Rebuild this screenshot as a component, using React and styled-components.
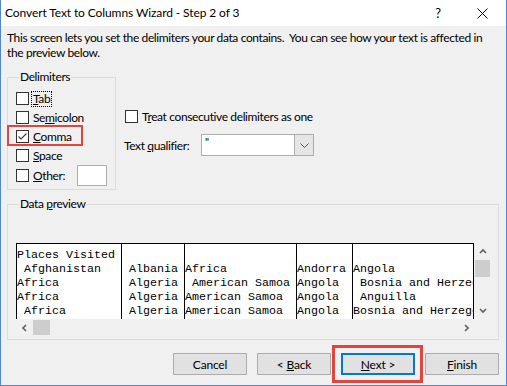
import React from "react";
import styled, { createGlobalStyle, css } from "styled-components";

const GlobalStyle = createGlobalStyle`
  body {
    margin: 0;
    background: #ffffff;
    font-family: "Segoe UI", Lato, "Noto Sans", Arial, sans-serif;
    font-size: 12px;
    letter-spacing: -0.38px;
    color: #000;
  }
`;

const preview = [
  { width: 105, lines: ["Places Visited", " Afghanistan", "Africa", "Africa", " Africa"] },
  { width: 63, lines: ["", " Albania", " Algeria", " Algeria", " Algeria"] },
  { width: 112, lines: ["", "Africa", " American Samoa", "American Samoa", "American Samoa"] },
  { width: 56, lines: ["", "Andorra", "Angola", "Angola", "Angola"] },
  { width: 122, lines: ["", "Angola", " Bosnia and Herzegovina", " Anguilla", "Bosnia and Herzegovina"], last: true },
];

export default function App() {
  return (
    <>
      <GlobalStyle />
      <Window>
        <TitleBar>
          <Title>Convert Text to Columns Wizard - Step 2 of 3</Title>
          <HelpGlyph>?</HelpGlyph>
          <CloseIcon width="11" height="11" viewBox="0 0 11 11">
            <path d="M0.5 0.5 L10.5 10.5 M10.5 0.5 L0.5 10.5" stroke="#000" strokeWidth="1" />
          </CloseIcon>
        </TitleBar>

        <Body>
          <Intro>
            <IntroLine>
              This screen lets you set the delimiters your data contains.{"\u00a0 "}You can see how your text is affected in
            </IntroLine>
            <IntroLine>the preview below.</IntroLine>
          </Intro>

          <OptionsRow>
            <GroupBox $width="109px" $pad="5px 0 3px 8px">
              <Legend>Delimiters</Legend>
              <CheckRow>
                <CheckBox />
                <Label $focus><Key>T</Key>ab</Label>
              </CheckRow>
              <CheckRow>
                <CheckBox />
                <Label>Se<Key>m</Key>icolon</Label>
              </CheckRow>
              <CheckRow $highlight>
                <CheckBox>
                  <svg width="11" height="11" viewBox="0 0 11 11">
                    <polyline points="1.5,5.5 4,8 9.5,2.5" fill="none" stroke="#3a3a3a" strokeWidth="1.1" />
                  </svg>
                </CheckBox>
                <Label><Key>C</Key>omma</Label>
              </CheckRow>
              <CheckRow>
                <CheckBox />
                <Label><Key>S</Key>pace</Label>
              </CheckRow>
              <CheckRow $tall>
                <CheckBox />
                <Label><Key>O</Key>ther:</Label>
                <OtherInput />
              </CheckRow>
            </GroupBox>

            <RightPanel>
              <CheckRow $indent>
                <CheckBox />
                <Label>T<Key>r</Key>eat consecutive delimiters as one</Label>
              </CheckRow>
              <QualifierRow>
                <QualifierLabel>Text <Key>q</Key>ualifier:</QualifierLabel>
                <Select>
                  <SelectValue>"</SelectValue>
                  <SelectButton>
                    <svg width="9" height="5" viewBox="0 0 9 5">
                      <polyline points="0.5,0.5 4.5,4.5 8.5,0.5" fill="none" stroke="#555" strokeWidth="1" />
                    </svg>
                  </SelectButton>
                </Select>
              </QualifierRow>
            </RightPanel>
          </OptionsRow>

          <GroupBox $pad="32px 7px 3px 8px" $top="7px">
            <Legend>Data <Key>p</Key>review</Legend>
            <ScrollArea>
              <Table>
                {preview.map((col, i) => (
                  <Column key={i} $width={col.width} $last={col.last}>
                    {col.lines.map((line, j) => (
                      <Cell key={j}>{line}</Cell>
                    ))}
                  </Column>
                ))}
              </Table>
              <VScroll>
                <ArrowBox>
                  <Chevron dir="up" />
                </ArrowBox>
                <VThumb />
                <Spacer />
                <ArrowBox>
                  <Chevron dir="down" />
                </ArrowBox>
              </VScroll>
              <HScroll>
                <ArrowBox>
                  <Chevron dir="left" />
                </ArrowBox>
                <HThumb />
                <Spacer />
                <ArrowBox>
                  <Chevron dir="right" />
                </ArrowBox>
              </HScroll>
            </ScrollArea>
          </GroupBox>

          <ButtonRow>
            <Button>Cancel</Button>
            <Button>&lt; <Key>B</Key>ack</Button>
            <Button $default $highlight><Key>N</Key>ext &gt;</Button>
            <Button><Key>F</Key>inish</Button>
          </ButtonRow>
        </Body>
      </Window>
    </>
  );
}

function Chevron({ dir }) {
  const pts = {
    up: "1,5 4,2 7,5",
    down: "1,2 4,5 7,2",
    left: "5,1 2,4 5,7",
    right: "3,1 6,4 3,7",
  }[dir];
  return (
    <svg width="8" height="8" viewBox="0 0 8 8">
      <polyline points={pts} fill="none" stroke="#606060" strokeWidth="1.6" />
    </svg>
  );
}

const Window = styled.div`
  width: 507px;
  height: 386px;
  box-sizing: border-box;
  border: 1px solid #4f88d3;
  border-top: none;
  display: flex;
  flex-direction: column;
  background: #f0f0f0;
  overflow: hidden;
`;

const TitleBar = styled.div`
  height: 26px;
  flex: none;
  background: #ffffff;
  display: flex;
  align-items: center;
  padding-left: 4px;
`;

const Title = styled.div`
  flex: 1;
  line-height: 16px;
  letter-spacing: -0.1px;
`;

const HelpGlyph = styled.div`
  width: 14px;
  font-size: 13px;
  text-align: center;
  margin-right: 32px;
`;

const CloseIcon = styled.svg`
  margin-right: 18px;
`;

const Body = styled.div`
  flex: 1;
  padding: 4px 7px 0 6px;
  display: flex;
  flex-direction: column;
`;

const Intro = styled.div`
  line-height: 15px;
`;

const IntroLine = styled.div`
  white-space: nowrap;
`;

const OptionsRow = styled.div`
  display: flex;
  align-items: flex-start;
  margin-top: 10px;
`;

const GroupBox = styled.fieldset`
  margin: ${p => p.$top || "0"} 0 0 0;
  padding: ${p => p.$pad};
  width: ${p => p.$width || "auto"};
  box-sizing: border-box;
  min-width: 0;
  border: 1px solid #dcdcdc;
`;

const Legend = styled.legend`
  padding: 0 1px;
  margin-left: 3px;
  line-height: 14px;
  font-size: 12px;
`;

const CheckRow = styled.div`
  position: relative;
  display: flex;
  align-items: center;
  height: ${p => (p.$tall ? "21px" : "19px")};
  padding-left: ${p => (p.$indent ? "1px" : "0")};
  ${p =>
    p.$highlight &&
    css`
      &::after {
        content: "";
        position: absolute;
        left: -9px;
        top: -2px;
        width: 76px;
        height: 21px;
        box-sizing: border-box;
        border: 2px solid #e5443d;
        pointer-events: none;
      }
    `}
`;

const CheckBox = styled.span`
  width: 13px;
  height: 13px;
  box-sizing: border-box;
  border: 1px solid #333333;
  background: #ffffff;
  display: flex;
  align-items: center;
  justify-content: center;
  flex: none;
`;

const Label = styled.span`
  margin-left: 3px;
  line-height: 14px;
  padding: 0 1px;
  outline: ${p => (p.$focus ? "1px dotted #000" : "none")};
`;

const Key = styled.u`
  text-decoration: underline;
  text-underline-offset: 1px;
`;

const OtherInput = styled.span`
  width: 30px;
  height: 21px;
  box-sizing: border-box;
  border: 1px solid #adadad;
  background: #ffffff;
  margin-left: auto;
  margin-right: 8px;
`;

const RightPanel = styled.div`
  margin-left: 8px;
  padding-top: 37px;
  display: flex;
  flex-direction: column;
`;

const QualifierRow = styled.div`
  display: flex;
  align-items: center;
  margin-top: 8px;
`;

const QualifierLabel = styled.span`
  width: 77px;
`;

const Select = styled.div`
  width: 113px;
  height: 22px;
  box-sizing: border-box;
  border: 1px solid #adadad;
  background: #ffffff;
  display: flex;
`;

const SelectValue = styled.span`
  flex: 1;
  padding-left: 3px;
  font-size: 11px;
  line-height: 14px;
`;

const SelectButton = styled.span`
  width: 18px;
  background: #e5e5e5;
  border-left: 1px solid #adadad;
  display: flex;
  align-items: center;
  justify-content: center;
`;

const ScrollArea = styled.div`
  display: grid;
  grid-template-columns: 458px 17px;
  grid-template-rows: 76px 17px;
`;

const Table = styled.div`
  display: flex;
  background: #ffffff;
  border-top: 1px solid #000;
  overflow: hidden;
  font-family: "Liberation Mono", "Courier New", monospace;
  font-size: 11.67px;
  letter-spacing: 0;
`;

const Column = styled.div`
  width: ${p => p.$width}px;
  flex: none;
  box-sizing: border-box;
  border-left: 1px solid #000;
  border-right: ${p => (p.$last ? "1px solid #000" : "none")};
  padding-top: 4px;
  overflow: hidden;
`;

const Cell = styled.div`
  height: 14px;
  line-height: 14px;
  white-space: pre;
`;

const VScroll = styled.div`
  display: flex;
  flex-direction: column;
`;

const HScroll = styled.div`
  display: flex;
`;

const ArrowBox = styled.div`
  width: 17px;
  height: 17px;
  flex: none;
  display: flex;
  align-items: center;
  justify-content: center;
`;

const VThumb = styled.div`
  height: 17px;
  margin: 0 1px;
  background: #cdcdcd;
`;

const HThumb = styled.div`
  width: 17px;
  margin: 1px 0;
  background: #cdcdcd;
`;

const Spacer = styled.div`
  flex: 1;
`;

const ButtonRow = styled.div`
  display: flex;
  justify-content: flex-end;
  gap: 10px;
  margin-top: 13px;
`;

const Button = styled.button`
  position: relative;
  width: 74px;
  height: 22px;
  box-sizing: border-box;
  padding: 0;
  border: ${p => (p.$default ? "2px solid #0078d7" : "1px solid #adadad")};
  background: #e1e1e1;
  font-family: inherit;
  font-size: 12px;
  letter-spacing: -0.2px;
  color: #000;
  ${p =>
    p.$highlight &&
    css`
      &::after {
        content: "";
        position: absolute;
        left: -11px;
        top: -10px;
        right: -10px;
        bottom: -10px;
        border: 3px solid #e5443d;
        pointer-events: none;
      }
    `}
`;
